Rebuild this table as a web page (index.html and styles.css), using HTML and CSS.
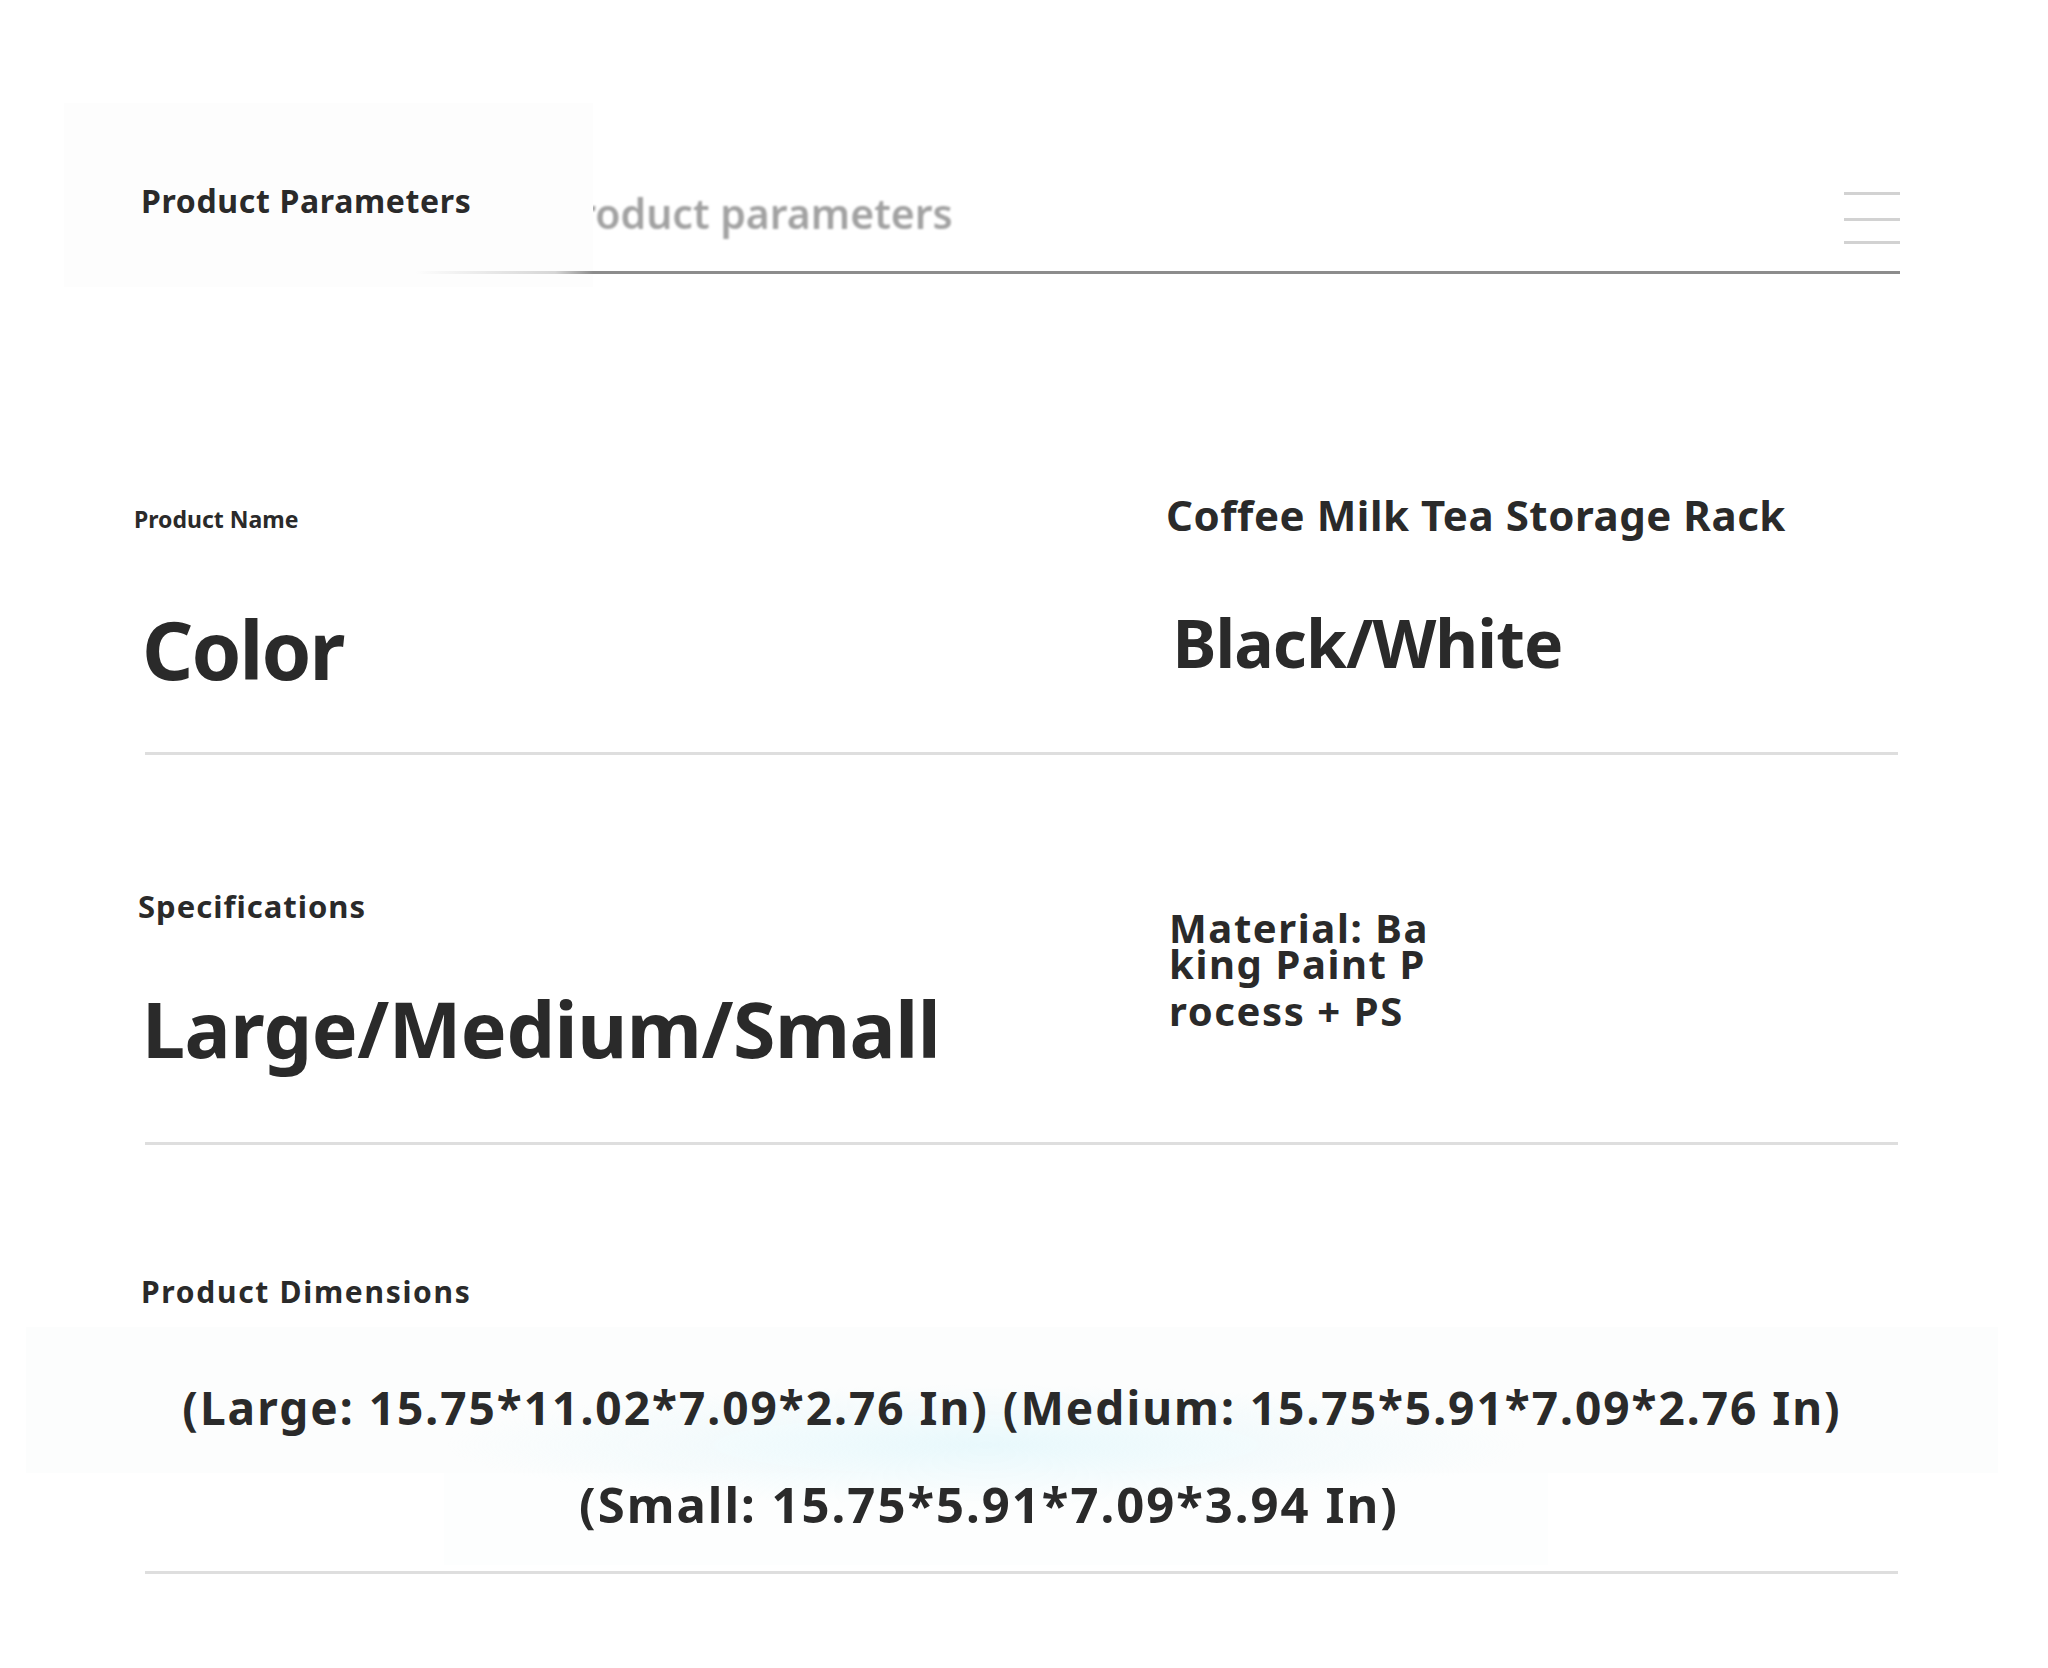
FILE: index.html
```html
<!DOCTYPE html>
<html lang="en">
<head>
<meta charset="utf-8">
<title>Product Parameters</title>
<link rel="stylesheet" href="styles.css">
</head>
<body>
<div class="page">
  <header class="header">
    <div class="header-box"><h1 class="title">Product Parameters</h1></div>
    <div class="ghost">Product parameters</div>
    <div class="menu"><span></span><span></span><span></span></div>
    <div class="header-rule"></div>
  </header>

  <section class="row row-1">
    <div class="cell pn">Product Name</div>
    <div class="cell coffee">Coffee Milk Tea Storage Rack</div>
    <div class="cell color">Color</div>
    <div class="cell bw">Black/White</div>
  </section>

  <section class="row row-2">
    <div class="cell spec">Specifications</div>
    <div class="cell material">
      <span class="m-line">Material: Ba</span>
      <span class="m-line">king Paint P</span>
      <span class="m-line">rocess + PS</span>
    </div>
    <div class="cell large">Large/Medium/Small</div>
  </section>

  <section class="row row-3">
    <div class="cell pd">Product Dimensions</div>
    <div class="dims">
      <div class="d-line d1">(Large: 15.75*11.02*7.09*2.76 In) (Medium: 15.75*5.91*7.09*2.76 In)</div>
      <div class="d-line d2">(Small: 15.75*5.91*7.09*3.94 In)</div>
    </div>
  </section>
</div>
</body>
</html>
```

FILE: styles.css
```css
html, body {
  margin: 0;
  padding: 0;
  background: #ffffff;
}

body {
  font-family: "Noto Sans", "Open Sans", sans-serif;
  color: #2a2a2a;
}

.page {
  width: 2048px;
  height: 1668px;
  overflow: hidden;
}

/* ---------- header ---------- */
.header {
  position: relative;
  display: flex;
  align-items: flex-start;
  margin: 103px 0 0 64px;
  width: 1836px;
  height: 184px;
}

.header-box {
  position: relative;
  z-index: 1;
  width: 529px;
  height: 184px;
  box-sizing: border-box;
  padding: 81.6px 0 0 77px;
  background: #fdfdfd;
}

.title {
  margin: 0;
  font-size: 32px;
  line-height: 1;
  font-weight: 700;
  letter-spacing: 0.65px;
  white-space: nowrap;
}

.ghost {
  margin: 90.3px 0 0 -40px;
  font-size: 41px;
  line-height: 1;
  font-weight: 600;
  color: #a2a2a2;
  filter: blur(0.8px);
  white-space: nowrap;
}

.menu {
  margin: 88.5px 0 0 auto;
  width: 56px;
  display: flex;
  flex-direction: column;
}

.menu span {
  display: block;
  height: 3px;
  background: #d2d2d2;
}

.menu span:nth-child(2) { margin-top: 23px; }
.menu span:nth-child(3) { margin-top: 20px; }

.header-rule {
  position: absolute;
  z-index: 2;
  left: 351px;
  top: 168px;
  width: 1485px;
  height: 3px;
  background: linear-gradient(to right,
    rgba(140, 140, 140, 0) 0,
    rgba(140, 140, 140, 0.35) 140px,
    #8c8c8c 178px,
    #8c8c8c);
}

/* ---------- rows ---------- */
.row {
  display: grid;
  grid-template-columns: 1021px 1fr;
  align-items: start;
  margin-left: 145px;
  width: 1753px;
  border-bottom: 3px solid #dedede;
}

.cell {
  position: relative;
  line-height: 1;
  font-weight: 700;
  white-space: nowrap;
}

.cell::before,
.cell::after {
  content: "";
  position: absolute;
  z-index: -1;
  background: #fdfdfd;
}

.cell::after { display: none; }

/* row 1 */
.row-1 {
  margin-top: 207.4px;
  padding-bottom: 63px;
}

.pn {
  font-size: 23px;
  margin: 14px 0 0 -11px;
}
.pn::before { left: -43px; top: -68.6px; width: 242px; height: 120px; }

.coffee {
  font-size: 42px;
  letter-spacing: 0.55px;
}
.coffee::before { left: -44px; top: -61.4px; width: 268px; height: 117px; }

.color {
  font-size: 80px;
  letter-spacing: -1.9px;
  margin: 72.6px 0 0 -3px;
}
.color::before { left: -103px; top: -49px; width: 735px; height: 150px; }

.bw {
  font-size: 66px;
  letter-spacing: -0.9px;
  margin: 72.6px 0 0 6.4px;
}
.bw::before { left: -70px; top: -56.4px; width: 484px; height: 165px; }

/* row 2 */
.row-2 {
  margin-top: 136.5px;
  padding-bottom: 75.4px;
}

.spec {
  grid-column: 1;
  grid-row: 1;
  font-size: 31px;
  letter-spacing: 1px;
  margin-left: -7px;
}
.spec::before { left: -40px; top: -68.5px; width: 248px; height: 127px; }

.material {
  grid-column: 2;
  grid-row: 1 / span 2;
  font-size: 40px;
  letter-spacing: 1.6px;
  margin: 17px 0 0 3px;
}
.material::before { left: -47px; top: -91.5px; width: 258px; height: 126px; }
.material::after { display: block; left: -80px; top: 36.5px; width: 608px; height: 150px; }

.m-line { display: block; }
.m-line:nth-child(1) { margin-bottom: -4px; }
.m-line:nth-child(2) { margin-bottom: 7px; }

.large {
  grid-column: 1;
  grid-row: 2;
  font-size: 77px;
  letter-spacing: -0.45px;
  margin: 67.1px 0 0 -3px;
}
.large::before { left: -103px; top: -36.6px; width: 735px; height: 142px; }

/* row 3 */
.row-3 {
  display: block;
  margin-top: 132.4px;
}

.pd {
  font-size: 30px;
  letter-spacing: 1.7px;
  margin-left: -4px;
}
.pd::before { left: -69px; top: -62px; width: 437px; height: 117px; }

.dims {
  margin: 19.6px -100px 0 -119px;
  padding: 57px 0 42.5px;
  text-align: center;
  line-height: 1;
  font-weight: 700;
  white-space: nowrap;
  background:
    radial-gradient(ellipse 540px 60px at 960px 118px, rgba(214, 244, 251, 0.5), rgba(255, 255, 255, 0)),
    linear-gradient(#fcfdfd, #fcfdfd) no-repeat left top / 100% 146px,
    linear-gradient(#fdfefe, #fdfefe) no-repeat 418px 146px / 1104px 92px;
}

.d1 {
  font-size: 46px;
  letter-spacing: 2px;
}

.d2 {
  font-size: 49px;
  letter-spacing: 2px;
  margin-top: 49.6px;
  padding-right: 46px;
}
```
